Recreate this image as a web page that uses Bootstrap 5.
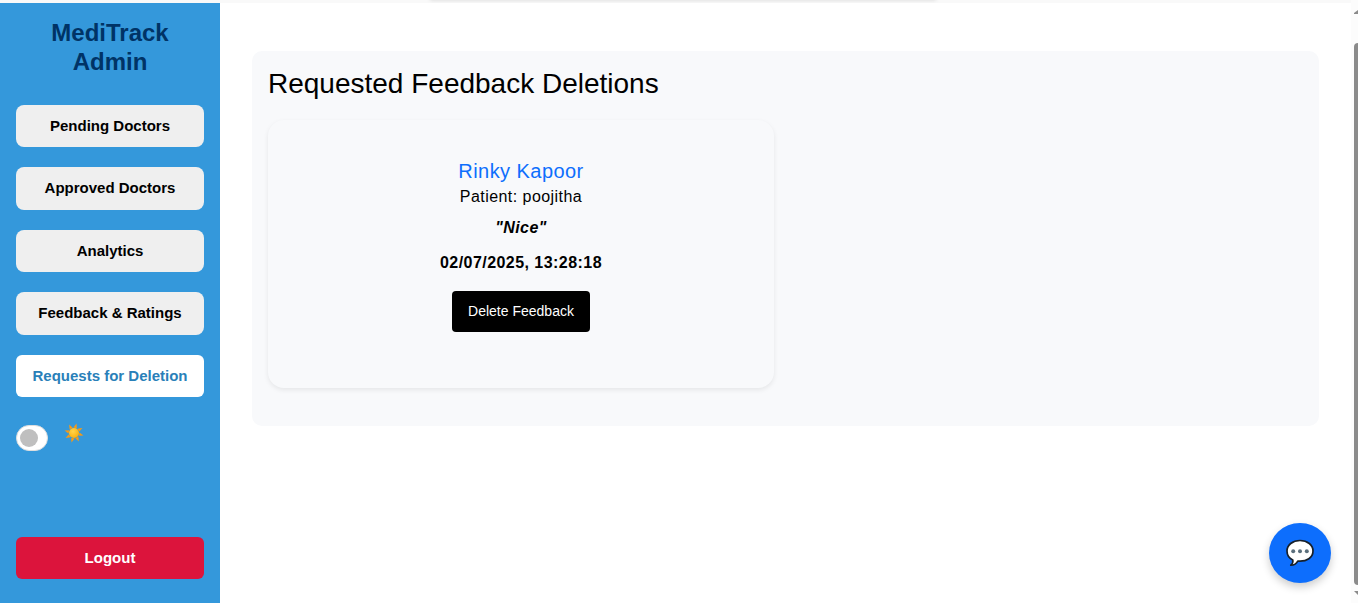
<!DOCTYPE html>
<html lang="en">
<head>
<meta charset="utf-8">
<meta name="viewport" content="width=device-width, initial-scale=1">
<title>MediTrack Admin</title>
<link href="https://cdn.jsdelivr.net/npm/bootstrap@5.3.0/dist/css/bootstrap.min.css" rel="stylesheet">
<style>
body { font-family: "Liberation Sans", Arial, sans-serif; color: #000; background: #fff; }
.top-strip { height: 3px; background: #f9f9f9; overflow: hidden; flex: none; }
.strip-shadow { width: 506px; height: 14px; margin: -15px auto 0 430px; box-shadow: 0 1px 4px rgba(0,0,0,.14); }
.sidebar { width: 220px; flex: none; background: #3498db; padding: 16px 16px 24px; }
.brand { font-size: 24px; line-height: 28.8px; font-weight: 700; color: #003366; margin: 0 0 28.4px; }
.side-menu { gap: 20px; }
.side-btn { height: 42.5px; padding: 0; font-size: 15px; line-height: 22.5px; font-weight: 700; border: 0; border-radius: 8px; background: #efefef; color: #000; }
.side-btn.current { background: #fff; color: #2980b9; border-radius: 6px; }
.side-btn.logout { background: #dc143c; color: #fff; height: 42px; border-radius: 6px; }
.mode-row { margin-top: 27.5px; height: 26px; gap: 16px; }
.mode-switch { width: 32px; height: 26px; border-radius: 13px; background: #fff; border: 1px solid #dedede; padding: 3px; }
.knob { width: 18px; height: 18px; border-radius: 50%; background: #bfbfbf; }
.sun-icon { margin-top: -2px; }
.main-area { padding: 48px 32px 0; }
.panel { height: 375px; border-radius: 10px; background: #f8f9fb; padding: 16px; }
.panel h1 { font-size: 28px; line-height: 33.6px; font-weight: 400; margin: 0 0 19px; }
.feedback { width: 506px; height: 268px; border-radius: 16px; background: #f8f9fb; box-shadow: 0 2px 5px rgba(0,0,0,.08); padding-top: 39px; letter-spacing: .45px; }
.doctor { font-size: 20px; line-height: 24px; color: #0d6efd; }
.patient { font-size: 16px; line-height: 24px; margin-top: 2px; }
.quote { font-size: 16px; line-height: 24px; margin-top: 7px; }
.stamp { font-size: 16px; line-height: 24px; margin-top: 11px; }
.delete-btn { width: 138px; height: 41px; margin-top: 16px; border: 0; border-radius: 4px; background: #000; color: #fff; font-size: 14px; padding: 0; letter-spacing: 0; }
.scroll-rail { width: 7px; background: #fcfcfc; padding-left: 3px; overflow: hidden; flex: none; }
.scroll-rail svg { display: block; flex: none; }
.chat { position: fixed; left: 1269px; top: 523px; width: 62px; height: 60px; border: 0; padding: 0; border-radius: 50%; background: #0d6efd; box-shadow: 0 4px 8px rgba(0,0,0,.2); }
</style>
</head>
<body class="overflow-hidden">
<div class="d-flex vh-100">
  <div class="d-flex flex-column flex-grow-1">
    <div class="top-strip"><div class="strip-shadow"></div></div>
    <div class="d-flex flex-grow-1">
      <aside class="sidebar d-flex flex-column">
        <h2 class="brand text-center">MediTrack<br>Admin</h2>
        <nav class="side-menu d-flex flex-column">
          <button class="btn side-btn w-100">Pending Doctors</button>
          <button class="btn side-btn w-100">Approved Doctors</button>
          <button class="btn side-btn w-100">Analytics</button>
          <button class="btn side-btn w-100">Feedback &amp; Ratings</button>
          <button class="btn side-btn current w-100">Requests for Deletion</button>
        </nav>
        <div class="mode-row d-flex align-items-start">
          <div class="mode-switch"><div class="knob"></div></div>
          <svg class="sun-icon" width="20" height="20" viewBox="-20 -20 40 40" aria-label="Light mode">
            <defs><radialGradient id="sun" cx=".4" cy=".35" r=".65"><stop offset="0" stop-color="#ffd54a"/><stop offset="1" stop-color="#fbb10f"/></radialGradient></defs>
            <g fill="#fb9a10" transform="rotate(12)">
              <path id="ray" d="M-3.500-10.500 1-19.500 3.500-10.500z"/>
              <use href="#ray" transform="rotate(45)"/><use href="#ray" transform="rotate(90)"/><use href="#ray" transform="rotate(135)"/><use href="#ray" transform="rotate(180)"/><use href="#ray" transform="rotate(225)"/><use href="#ray" transform="rotate(270)"/><use href="#ray" transform="rotate(315)"/>
            </g>
            <circle r="10" fill="url(#sun)"/>
          </svg>
        </div>
        <button class="btn side-btn logout w-100 mt-auto">Logout</button>
      </aside>
      <main class="main-area flex-grow-1">
        <section class="panel">
          <h1>Requested Feedback Deletions</h1>
          <article class="feedback d-flex flex-column align-items-center text-center">
            <div class="doctor">Rinky Kapoor</div>
            <div class="patient">Patient: poojitha</div>
            <div class="quote fw-bold fst-italic">"Nice"</div>
            <div class="stamp fw-bold">02/07/2025, 13:28:18</div>
            <button class="btn delete-btn">Delete Feedback</button>
          </article>
        </section>
      </main>
    </div>
  </div>
  <div class="scroll-rail">
    <svg width="4" height="603" viewBox="0 0 4 603">
      <g fill="#8b8b8b"><path d="M0 14v-1l4-3v4z"/><path d="M0 591h4v4z"/><rect y="43" width="12" height="542" rx="4"/></g>
    </svg>
  </div>
</div>
<button class="chat d-flex align-items-center justify-content-center" aria-label="Open chat">
  <svg width="28" height="28" viewBox="0 0 28 28">
    <path d="M14 1.500C6.500 1.500 1 6 1 12c0 4.400 2.300 7.300 5.800 9 .4 2.100-.2 3.700-2 5.200 3.200 0 5.800-1.500 7-4.200C21 22.800 27 18.400 27 12 27 6 21.500 1.500 14 1.500z" fill="#fff" stroke="#17202a" stroke-width="1.700" stroke-linejoin="round"/>
    <g fill="#5b6f7c"><circle cx="7.200" cy="12.300" r="2"/><circle cx="14" cy="12.300" r="2"/><circle cx="20.800" cy="12.300" r="2"/></g>
  </svg>
</button>
<script src="https://cdn.jsdelivr.net/npm/bootstrap@5.3.0/dist/js/bootstrap.bundle.min.js"></script>
</body>
</html>
